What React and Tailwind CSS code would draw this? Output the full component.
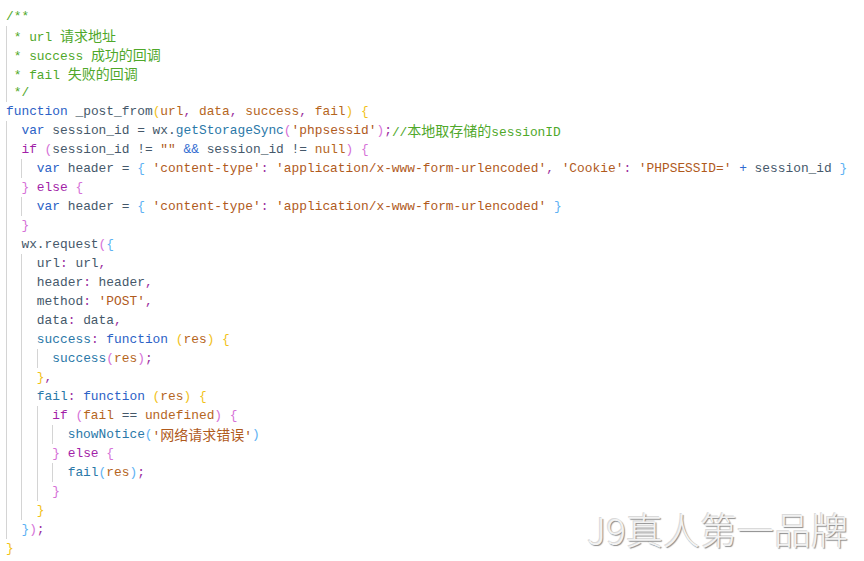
import React from "react";

// token colours
const K = "text-[#2c62c6]"; // function / var
const C = "text-[#a21fa8]"; // if / else
const CM = "text-[#4fa82a]"; // comments
const S = "text-[#b05a1c]"; // strings
const I = "text-[#45586a]"; // identifiers
const F = "text-[#2a78a8]"; // functions / methods
const P = "text-[#b5651d]"; // params, null, undefined
const PU = "text-[#9b2fa0]"; // , ; :
const OP = "text-[#2f6ad0]"; // && +
const B1 = "text-[#f2c21a]";
const B2 = "text-[#d672d8]";
const B3 = "text-[#5eb2f3]";

const lines = [
  { lvl: 0, t: [[CM, "/**"]] },
  { lvl: 1, unit: 1, t: [[CM, "* url 请求地址"]] },
  { lvl: 1, unit: 1, t: [[CM, "* success 成功的回调"]] },
  { lvl: 1, unit: 1, t: [[CM, "* fail 失败的回调"]] },
  { lvl: 1, unit: 1, t: [[CM, "*/"]] },
  {
    lvl: 0,
    t: [
      [K, "function "], [I, "_post_from"], [B1, "("], [P, "url"], [PU, ", "], [P, "data"], [PU, ", "],
      [P, "success"], [PU, ", "], [P, "fail"], [B1, ")"], [I, " "], [B1, "{"],
    ],
  },
  {
    lvl: 1,
    t: [
      [K, "var "], [I, "session_id = wx."], [F, "getStorageSync"], [B2, "("], [S, "'phpsessid'"], [B2, ")"],
      [PU, ";"], [CM, "//本地取存储的sessionID"],
    ],
  },
  {
    lvl: 1,
    t: [
      [C, "if "], [B2, "("], [I, "session_id != "], [S, '""'], [OP, " && "], [I, "session_id != "], [P, "null"],
      [B2, ")"], [I, " "], [B2, "{"],
    ],
  },
  {
    lvl: 2,
    t: [
      [K, "var "], [I, "header = "], [B3, "{"], [I, " "], [S, "'content-type'"], [PU, ": "],
      [S, "'application/x-www-form-urlencoded'"], [PU, ", "], [S, "'Cookie'"], [PU, ": "], [S, "'PHPSESSID='"],
      [OP, " + "], [I, "session_id "], [B3, "}"],
    ],
  },
  { lvl: 1, t: [[B2, "}"], [C, " else "], [B2, "{"]] },
  {
    lvl: 2,
    t: [
      [K, "var "], [I, "header = "], [B3, "{"], [I, " "], [S, "'content-type'"], [PU, ": "],
      [S, "'application/x-www-form-urlencoded'"], [I, " "], [B3, "}"],
    ],
  },
  { lvl: 1, t: [[B2, "}"]] },
  { lvl: 1, t: [[I, "wx.request"], [B2, "("], [B3, "{"]] },
  { lvl: 2, t: [[I, "url"], [PU, ": "], [I, "url"], [PU, ","]] },
  { lvl: 2, t: [[I, "header"], [PU, ": "], [I, "header"], [PU, ","]] },
  { lvl: 2, t: [[I, "method"], [PU, ": "], [S, "'POST'"], [PU, ","]] },
  { lvl: 2, t: [[I, "data"], [PU, ": "], [I, "data"], [PU, ","]] },
  {
    lvl: 2,
    t: [[F, "success"], [PU, ": "], [K, "function "], [B1, "("], [P, "res"], [B1, ")"], [I, " "], [B1, "{"]],
  },
  { lvl: 3, t: [[F, "success"], [B2, "("], [P, "res"], [B2, ")"], [PU, ";"]] },
  { lvl: 2, t: [[B1, "}"], [PU, ","]] },
  {
    lvl: 2,
    t: [[F, "fail"], [PU, ": "], [K, "function "], [B1, "("], [P, "res"], [B1, ")"], [I, " "], [B1, "{"]],
  },
  {
    lvl: 3,
    t: [[C, "if "], [B2, "("], [P, "fail"], [I, " == "], [P, "undefined"], [B2, ")"], [I, " "], [B2, "{"]],
  },
  { lvl: 4, t: [[F, "showNotice"], [B3, "("], [S, "'网络请求错误'"], [B3, ")"]] },
  { lvl: 3, t: [[B2, "}"], [C, " else "], [B2, "{"]] },
  { lvl: 4, t: [[F, "fail"], [B3, "("], [P, "res"], [B3, ")"], [PU, ";"]] },
  { lvl: 3, t: [[B2, "}"]] },
  { lvl: 2, t: [[B1, "}"]] },
  { lvl: 1, t: [[B3, "}"], [B2, ")"], [PU, ";"]] },
  { lvl: 0, t: [[B1, "}"]] },
];

function Text({ text }) {
  const parts = text.split(/([\u4e00-\u9fff]+)/);
  return parts.map((p, i) =>
    /[\u4e00-\u9fff]/.test(p) ? (
      <span key={i} className="text-[14px] font-['Noto_Sans_CJK_SC',sans-serif]">
        {p}
      </span>
    ) : (
      p
    )
  );
}

function Line({ line }) {
  const guides = Array.from({ length: line.lvl });
  return (
    <div className="flex h-[19px] leading-[19px] whitespace-pre">
      {guides.map((_, i) => (
        <span
          key={i}
          className={`block shrink-0 border-l border-[#d4d4d4] ${line.unit === 1 ? "w-[1ch]" : "w-[2ch]"}`}
        />
      ))}
      {line.t.map(([cls, txt], i) => (
        <span key={i} className={cls}>
          <Text text={txt} />
        </span>
      ))}
    </div>
  );
}

export default function App() {
  return (
    <div className="relative w-[864px] h-[561px] overflow-hidden bg-white">
      <div className="pl-[6px] pt-[7px] font-['Liberation_Mono','Noto_Sans_CJK_SC',monospace] text-[12.87px]">
        {lines.map((line, i) => (
          <Line key={i} line={line} />
        ))}
      </div>
      <div className="absolute right-[16px] bottom-[10px] font-['Noto_Sans_CJK_SC',sans-serif] font-light text-[37px] leading-[44px] text-[#f2f2f2] [text-shadow:1px_1px_1px_#8c8c8c,-1px_-1px_0_#dadada]">
        J9真人第一品牌
      </div>
    </div>
  );
}
